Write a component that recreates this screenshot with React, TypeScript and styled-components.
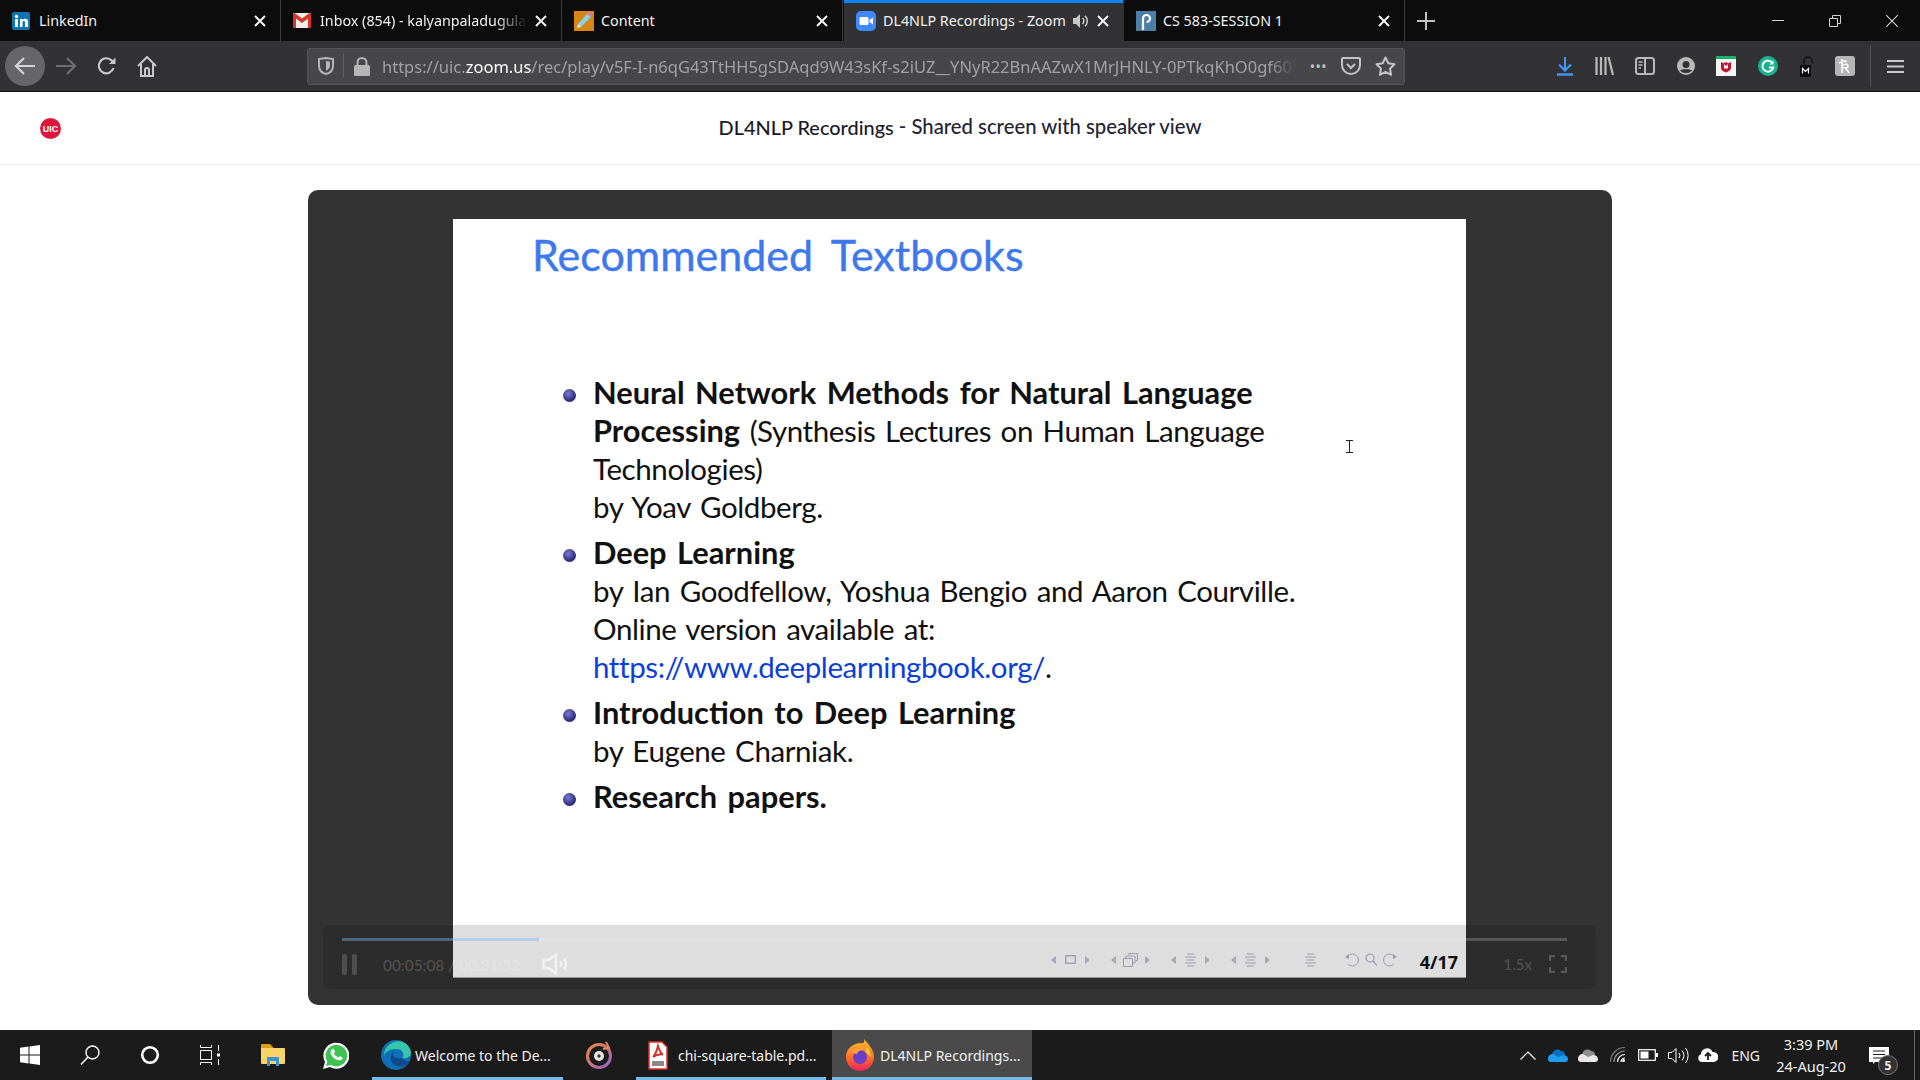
import React from 'react'
import styled, { createGlobalStyle } from 'styled-components'

const GlobalStyle = createGlobalStyle`
  html, body {
    margin: 0;
    padding: 0;
    background: #fff;
    font-family: 'Noto Sans', 'Open Sans', sans-serif;
  }
  * { box-sizing: border-box; }
`

/* browser chrome icons */
const Svg = styled.svg`
  display: block;
  flex: none;
`

const LinkedInIcon = () => (
  <Svg width="18" height="18" viewBox="0 0 18 18">
    <rect width="18" height="18" rx="2" fill="#0f75b0" />
    <rect x="3" y="7" width="3" height="8" fill="#fff" />
    <circle cx="4.5" cy="4.5" r="1.7" fill="#fff" />
    <path d="M8 7h2.8v1.2C11.4 7.3 12.3 6.8 13.4 6.8c2 0 2.6 1.3 2.6 3.4V15h-3v-4.3c0-1-.3-1.6-1.1-1.6-.9 0-1.4.6-1.4 1.7V15H8z" fill="#fff" />
  </Svg>
)
const GmailIcon = () => (
  <Svg width="18" height="15" viewBox="0 0 18 15">
    <rect width="18" height="15" rx="1" fill="#f1efec" />
    <path d="M0 1.5V15h3V5.5L9 10l6-4.500V15h3V1.500C18 .4 16.800-.3 15.800.4L9 5.500 2.200.4C1.200-.3 0 .4 0 1.500z" fill="#d5352b" />
  </Svg>
)
const ContentIcon = () => (
  <Svg width="20" height="20" viewBox="0 0 20 20">
    <rect width="20" height="20" fill="#d98512" />
    <path d="M3 17l1-4L13 3l4 3L7 16z" fill="#7fd6ea" />
    <path d="M13 3l2-2 3 3-1 2z" fill="#d678c8" />
    <path d="M3 17l1-4 3 3z" fill="#f7e4b0" />
  </Svg>
)
const ZoomIcon = () => (
  <Svg width="20" height="20" viewBox="0 0 20 20">
    <rect width="20" height="20" rx="5" fill="#3d8bff" />
    <rect x="3.500" y="6" width="9" height="8" rx="1.500" fill="#fff" />
    <path d="M13.500 9l3.500-2.500v7L13.500 11z" fill="#fff" />
  </Svg>
)
const PanoptoIcon = () => (
  <Svg width="20" height="20" viewBox="0 0 20 20">
    <rect width="20" height="20" fill="#4b7fa8" />
    <path d="M7 19V7.500a3.500 3.500 0 1 1 3.500 3.500" fill="none" stroke="#fff" strokeWidth="2.200" />
  </Svg>
)
const CloseIcon = ({ size = 12, weight = 2 }: { size?: number; weight?: number }) => (
  <Svg width={size} height={size} viewBox="0 0 12 12">
    <path d="M1 1l10 10M11 1L1 11" stroke="currentColor" strokeWidth={weight} fill="none" />
  </Svg>
)
const SpeakerFill = () => (
  <Svg width="17" height="16" viewBox="0 0 17 16">
    <path d="M1 5h3l4-4v14l-4-4H1z" fill="#c8c8c8" />
    <path d="M10.500 5a4 4 0 0 1 0 6M13 2.800a7 7 0 0 1 0 10.400" stroke="#c8c8c8" strokeWidth="1.600" fill="none" />
  </Svg>
)

const BackArrow = ({ color }: { color: string }) => (
  <Svg width="22" height="20" viewBox="0 0 22 20">
    <path d="M10 2L2 10l8 8M2.500 10H21" stroke={color} strokeWidth="2.200" fill="none" />
  </Svg>
)
const ForwardArrow = ({ color }: { color: string }) => (
  <Svg width="22" height="20" viewBox="0 0 22 20">
    <path d="M12 2l8 8-8 8M19.500 10H1" stroke={color} strokeWidth="2.200" fill="none" />
  </Svg>
)
const ReloadIcon = () => (
  <Svg width="20" height="20" viewBox="0 0 20 20">
    <path d="M16.500 12a7.500 7.500 0 1 1-1.800-7.500L17.500 7" stroke="#c9c9c9" strokeWidth="2.200" fill="none" />
    <path d="M18.500 1.500V8h-6.500z" fill="#c9c9c9" />
  </Svg>
)
const HomeIcon = () => (
  <Svg width="20" height="21" viewBox="0 0 20 21">
    <path d="M1 10l9-9 9 9M4 8v12h12V8M8 20v-6a2 2 0 0 1 4 0v6" stroke="#c9c9c9" strokeWidth="2" fill="none" />
  </Svg>
)
const ShieldIcon = () => (
  <Svg width="16" height="18" viewBox="0 0 16 18">
    <path d="M1 2l7-1 7 1v7c0 4-3 7-7 8-4-1-7-4-7-8z" fill="none" stroke="#b5b5b5" strokeWidth="2" />
    <path d="M8 4l4 .6V9c0 2-2 4-4 4.800z" fill="#b5b5b5" />
  </Svg>
)
const LockIcon = () => (
  <Svg width="16" height="19" viewBox="0 0 16 19">
    <rect y="8" width="16" height="11" rx="1.500" fill="#b5b5b5" />
    <path d="M3.500 8.500V5.500a4.500 4.500 0 0 1 9 0v3" fill="none" stroke="#b5b5b5" strokeWidth="2" />
  </Svg>
)
const PocketIcon = () => (
  <Svg width="20" height="18" viewBox="0 0 20 18">
    <path d="M2 1h16a1 1 0 0 1 1 1v6a9 9 0 0 1-18 0V2a1 1 0 0 1 1-1z" fill="none" stroke="#c4c4c4" strokeWidth="2" />
    <path d="M6 7l4 4 4-4" fill="none" stroke="#c4c4c4" strokeWidth="2" />
  </Svg>
)
const StarIcon = () => (
  <Svg width="21" height="20" viewBox="0 0 21 20">
    <path d="M10.500 1.500l2.800 5.800 6.200.9-4.500 4.400 1.100 6.200-5.600-3-5.600 3 1.100-6.200L1.500 8.200l6.200-.9z" fill="none" stroke="#c4c4c4" strokeWidth="2" strokeLinejoin="round" />
  </Svg>
)
const DownloadIcon = () => (
  <Svg width="16" height="20" viewBox="0 0 16 20">
    <path d="M8 1v13M2 8.500L8 14.500l6-6" stroke="#3d9bff" strokeWidth="2" fill="none" />
    <path d="M0 18.500h16" stroke="#3d9bff" strokeWidth="2.400" />
  </Svg>
)
const LibraryIcon = () => (
  <Svg width="19" height="18" viewBox="0 0 19 18">
    <path d="M1.500 0v18M6 0v18M10.500 0v18M13.500 0l4.500 18" stroke="#b9b9b9" strokeWidth="2.200" fill="none" />
  </Svg>
)
const SidebarIcon = () => (
  <Svg width="20" height="18" viewBox="0 0 20 18">
    <rect x="1" y="1" width="18" height="16" rx="2.500" fill="none" stroke="#b9b9b9" strokeWidth="2" />
    <path d="M10 1v16" stroke="#b9b9b9" strokeWidth="2" />
    <path d="M3.500 5h4M3.500 8h4M3.500 11h2.500" stroke="#b9b9b9" strokeWidth="1.400" />
  </Svg>
)
const AccountIcon = () => (
  <Svg width="18" height="18" viewBox="0 0 18 18">
    <circle cx="9" cy="9" r="9" fill="#b9b9b9" />
    <circle cx="9" cy="7.500" r="3.500" fill="#323234" />
    <path d="M3 13.500c1.800-1.600 10.200-1.600 12 0-1.500 1.700-3.500 2.500-6 2.500s-4.500-.8-6-2.500z" fill="#323234" />
  </Svg>
)
const McAfeeIcon = () => (
  <Svg width="20" height="20" viewBox="0 0 20 20">
    <rect width="20" height="20" fill="#f5f5f5" />
    <rect width="20" height="3" fill="#17b26a" />
    <path d="M5 6l2.500 1.200L10 6l2.500 1.200L15 6v6c0 2-2.500 3.500-5 4.500C7.500 15.500 5 14 5 12z" fill="#c0162c" />
    <path d="M8 8v4.500h4V8l-2 2z" fill="#f5f5f5" />
  </Svg>
)
const GrammarlyIcon = () => (
  <Svg width="20" height="20" viewBox="0 0 20 20">
    <circle cx="10" cy="10" r="10" fill="#15b38f" />
    <path d="M14.500 7a5.500 5.500 0 1 0 .8 4.500H11" fill="none" stroke="#fff" strokeWidth="2" />
    <path d="M15.500 4.500v4h-4z" fill="#fff" />
  </Svg>
)
const MediumLockIcon = () => (
  <Svg width="14" height="21" viewBox="0 0 14 21">
    <path d="M5 9V5a4 4 0 0 1 8 0v2" fill="none" stroke="#111" strokeWidth="1.500" />
    <rect x="1" y="9" width="11" height="12" rx="1" fill="#0b0b0b" />
    <path d="M3.500 17.500v-5l3 3 3-3v5" stroke="#fff" strokeWidth="1.200" fill="none" />
  </Svg>
)
const HoneyIcon = () => (
  <Svg width="20" height="20" viewBox="0 0 20 20">
    <rect width="20" height="20" rx="3" fill="#b5b5b5" />
    <path d="M7 3v14M7 10c2-2 6-3 6 0 0 2-2 2-3 2 1 .6 2.500 2 4 5M4 7c2-1 6-2 8-2" stroke="#fff" strokeWidth="1.500" fill="none" />
  </Svg>
)
const MenuIcon = () => (
  <Svg width="17" height="15" viewBox="0 0 17 15">
    <path d="M0 2h17M0 7.500h17M0 13h17" stroke="#c9c9c9" strokeWidth="2.200" />
  </Svg>
)
const PlusIcon = () => (
  <Svg width="18" height="18" viewBox="0 0 18 18">
    <path d="M9 0v18M0 9h18" stroke="#c2c2c2" strokeWidth="2" />
  </Svg>
)
const RestoreIcon = () => (
  <Svg width="12" height="12" viewBox="0 0 12 12">
    <path d="M.5 3.500h8v8h-8zM3.500 3V.5h8v8H9" fill="none" stroke="#d0d0d0" />
  </Svg>
)

/* player icons */
const PauseIcon = () => (
  <Svg width="15" height="21" viewBox="0 0 15 21">
    <rect width="5" height="21" rx="2" fill="rgba(255,255,255,.17)" />
    <rect x="10" width="5" height="21" rx="2" fill="rgba(255,255,255,.17)" />
  </Svg>
)
const VolumeIcon = () => (
  <Svg width="26" height="22" viewBox="0 0 26 22">
    <path d="M1.500 7h5L14 1.500v19L6.500 15h-5z" fill="none" stroke="#f2f2f2" strokeWidth="2.400" />
    <path d="M18 8a5 5 0 0 1 0 6" fill="none" stroke="#f2f2f2" strokeWidth="2" />
    <path d="M22 5.500a10 10 0 0 1 0 11" fill="none" stroke="#f2f2f2" strokeWidth="2.400" />
  </Svg>
)
const FullscreenIcon = () => (
  <Svg width="18" height="18" viewBox="0 0 18 18">
    <path d="M1 6V1h5M12 1h5v5M17 12v5h-5M6 17H1v-5" stroke="rgba(255,255,255,.2)" strokeWidth="2.400" fill="none" />
  </Svg>
)

/* beamer navigation symbols */
const navInk = '#b3b3c6'
const Arrowhead = ({ right }: { right?: boolean }) => (
  <Svg width="5" height="8" viewBox="0 0 5 8">
    <path d={right ? 'M0 0l5 4-5 4z' : 'M5 0L0 4l5 4z'} fill={navInk} opacity={0.8} />
  </Svg>
)
const NavFrame = () => (
  <Svg width="11" height="9" viewBox="0 0 11 9">
    <rect x=".7" y=".7" width="9.600" height="7.600" fill="none" stroke={navInk} strokeWidth="1.300" />
  </Svg>
)
const NavStack = () => (
  <Svg width="15" height="14" viewBox="0 0 15 14">
    <path d="M.5 5.500h9v8h-9zM3 5V3h9v7h-2M6 2.500V.5h8.500v7H12.500" fill="none" stroke={navInk} />
  </Svg>
)
const NavLines = () => (
  <Svg width="11" height="14" viewBox="0 0 11 14">
    <path d="M2 1h7M0 4h11M2 7h7M0 10h11M2 13h7" stroke={navInk} strokeWidth="1.200" />
  </Svg>
)
const NavBack = () => (
  <Svg width="15" height="14" viewBox="0 0 15 14">
    <path d="M3 3a6 6 0 1 1 0 8" fill="none" stroke={navInk} />
    <path d="M0 4l4 2V1z" fill={navInk} />
  </Svg>
)
const NavSearch = () => (
  <Svg width="12" height="13" viewBox="0 0 12 13">
    <circle cx="5" cy="5" r="4" fill="none" stroke={navInk} strokeWidth="1.200" />
    <path d="M8 8l4 4.500" stroke={navInk} strokeWidth="1.400" />
  </Svg>
)
const NavForward = () => (
  <Svg width="15" height="14" viewBox="0 0 15 14">
    <path d="M12 3a6 6 0 1 0 0 8" fill="none" stroke={navInk} />
    <path d="M15 4l-4 2V1z" fill={navInk} />
  </Svg>
)

/* taskbar icons */
const WindowsIcon = () => (
  <Svg width="20" height="20" viewBox="0 0 20 20">
    <path d="M0 2.800l8.500-1.200v8H0zM9.500 1.400L20 0v9.600H9.500zM0 10.500h8.500v8L0 17.300zM9.500 10.500H20V20L9.500 18.600z" fill="#fff" />
  </Svg>
)
const SearchIcon = () => (
  <Svg width="20" height="20" viewBox="0 0 20 20">
    <circle cx="12.500" cy="7.500" r="6.500" fill="none" stroke="#fff" strokeWidth="1.400" />
    <path d="M8 12l-7 7.500" stroke="#fff" strokeWidth="1.400" />
  </Svg>
)
const CortanaIcon = () => (
  <Svg width="20" height="20" viewBox="0 0 20 20">
    <circle cx="10" cy="10" r="7.800" fill="none" stroke="#fff" strokeWidth="2.600" />
  </Svg>
)
const TaskViewIcon = () => (
  <Svg width="20" height="20" viewBox="0 0 20 20">
    <path d="M.5 0v2.500h11V0M.5 20v-2.500h11V20M.5 5.500h11v9H.5zM18.500 0v6M18.500 14v6" fill="none" stroke="#fff" />
    <rect x="17" y="8.500" width="3" height="3" fill="#fff" />
  </Svg>
)
const ExplorerIcon = () => (
  <Svg width="24" height="22" viewBox="0 0 24 22">
    <path d="M0 1a1 1 0 0 1 1-1h8l3 3v2H0z" fill="#dd9f12" />
    <rect y="4" width="24" height="16" rx="1" fill="#f9d568" />
    <path d="M6 22V13h12v9h-3v-5H9v5z" fill="#3b92d8" />
  </Svg>
)
const WhatsAppIcon = () => (
  <Svg width="26" height="27" viewBox="0 0 26 27">
    <path d="M0 27l2-7A13 13 0 1 1 7 25z" fill="#fff" />
    <path d="M3 24l1.300-4.500A10.800 10.800 0 1 1 8 23z" fill="#3fc252" />
    <path d="M8.500 7.500c1-1.300 2-1 2.500 0l1 2c.2.600-1 1.600-1 2 .8 1.600 2.200 3 4 3.800.6 0 1.400-1.300 2-1.100l2 1c.7.400.6 1.300 0 2-1.500 1.800-4 1.300-6.500 0-3.500-2-6.500-6.800-4-9.700z" fill="#fff" />
  </Svg>
)
const EdgeIcon = () => (
  <Svg width="30" height="30" viewBox="0 0 30 30">
    <circle cx="15" cy="15" r="15" fill="#0d6fb8" />
    <path d="M3 17C2 6 13-1 22 2c5 2 8 7 8 11 0 4-5 6-9 5 3-3 1-9-6-9-6 0-12 3-12 8z" fill="#35c5a9" />
    <path d="M21 18c-3 1-9 0-9-4 0-3 3-5 5-4-5 0-8 4-7 10 1 5 7 8 13 6 3-1 5-3 6-5-2 1-5 0-8-3z" fill="#114a8b" />
  </Svg>
)
const GrooveIcon = () => (
  <Svg width="26" height="30" viewBox="0 0 26 30">
    <circle cx="13" cy="16" r="11.500" fill="none" stroke="url(#groove)" strokeWidth="3" />
    <circle cx="13" cy="16" r="5" fill="#e6e6e6" />
    <circle cx="13" cy="16" r="1.700" fill="#333" />
    <path d="M20 2l3 6-6 1" fill="none" stroke="#e08a50" strokeWidth="2" />
    <defs>
      <linearGradient id="groove" x1="0" y1="0" x2="1" y2="1">
        <stop offset="0" stopColor="#f08a3c" />
        <stop offset="1" stopColor="#9a5fc8" />
      </linearGradient>
    </defs>
  </Svg>
)
const PdfIcon = () => (
  <Svg width="20" height="29" viewBox="0 0 20 29">
    <path d="M1 1h13l5 5v22H1z" fill="#fff" stroke="#d6332b" strokeWidth="1.500" />
    <path d="M10 5c-1 4-3 9-5 11 3-2 7-3 10-2.500-3-1.500-4-5.500-5-8.500z" fill="none" stroke="#d6332b" strokeWidth="2" />
    <rect x="4" y="20" width="12" height="5" fill="#8a8a8a" />
  </Svg>
)
const FirefoxIcon = () => (
  <Svg width="28" height="32" viewBox="0 0 28 32">
    <defs>
      <linearGradient id="fox" x1="0" y1="0" x2="0" y2="1">
        <stop offset="0" stopColor="#ffbd2e" />
        <stop offset=".6" stopColor="#ff6a2b" />
        <stop offset="1" stopColor="#e8245c" />
      </linearGradient>
    </defs>
    <path d="M14 4C7 5 0 9 0 18a14 14 0 0 0 28 0C28 10 22 5 18 0c1 4-1 5-4 4z" fill="url(#fox)" />
    <circle cx="14" cy="18" r="7" fill="#6a3ec6" />
    <path d="M5 13c3-4 10-4 13-2-4 0-6 1-7 4-2 0-4-1-6-2z" fill="#ffa230" />
    <path d="M20 8c3 2 5 6 5 10l-5-5z" fill="#ffcf3d" />
  </Svg>
)
const ChevronIcon = () => (
  <Svg width="16" height="9" viewBox="0 0 16 9">
    <path d="M.5 8.500L8 1l7.500 7.500" stroke="#fff" strokeWidth="1.200" fill="none" />
  </Svg>
)
const CloudIcon = ({ top, bottom }: { top: string; bottom: string }) => (
  <Svg width="20" height="13" viewBox="0 0 20 13">
    <path d="M4 5C5 1 10-1 13 2c3 0 4 2 4 4L8 9z" fill={top} />
    <path d="M0 10c0-3 2-5 5-5l5 3 5-2c3-.5 5 2 5 4s-1 3-3 3H3c-2 0-3-1-3-3z" fill={bottom} />
  </Svg>
)
const WifiIcon = () => (
  <Svg width="16" height="16" viewBox="0 0 16 16">
    <path d="M.5 15A14.500 14.500 0 0 1 15 .5" stroke="#777" strokeWidth="1.200" fill="none" />
    <path d="M4 15A11 11 0 0 1 15 4" stroke="#888" strokeWidth="1.200" fill="none" />
    <path d="M7.500 15A7.500 7.500 0 0 1 15 7.500M11 15a4 4 0 0 1 4-4" stroke="#fff" strokeWidth="1.200" fill="none" />
    <circle cx="13.500" cy="13.500" r="1.500" fill="#fff" />
  </Svg>
)
const BatteryIcon = () => (
  <Svg width="20" height="12" viewBox="0 0 20 12">
    <rect x=".7" y=".7" width="16.600" height="10.600" fill="none" stroke="#fff" strokeWidth="1.200" />
    <rect x="2.500" y="2.500" width="8" height="7" fill="#fff" />
    <rect x="18" y="4" width="2" height="4" fill="#fff" />
  </Svg>
)
const TraySpeaker = () => (
  <Svg width="21" height="17" viewBox="0 0 21 17">
    <path d="M.5 5.500h3.500L8 1.500v14l-4-4H.5z" fill="none" stroke="#fff" />
    <path d="M11 6a4 4 0 0 1 0 5M14 3.500a8 8 0 0 1 0 10M17.500 1a12 12 0 0 1 0 15" fill="none" stroke="#fff" />
  </Svg>
)
const UploadCloud = () => (
  <Svg width="20" height="14" viewBox="0 0 20 14">
    <path d="M4 14a4 4 0 0 1-1-7.800A6 6 0 0 1 14.500 4 5 5 0 0 1 16 14z" fill="#fff" />
    <path d="M10 12V6M7 8l3-3 3 3" stroke="#1b1b1b" strokeWidth="1.800" fill="none" />
  </Svg>
)
const NotifIcon = () => (
  <Svg width="20" height="17" viewBox="0 0 20 17">
    <path d="M0 0h20v15H6l-2 2v-2H0z" fill="#fff" />
    <path d="M4 4h12M4 7.500h12M4 11h12" stroke="#1b1b1b" />
  </Svg>
)
const IBeam = () => (
  <Svg width="7" height="13" viewBox="0 0 7 13">
    <path d="M0 .5h7M0 12.500h7M3.500 .5v12" stroke="#222" />
  </Svg>
)

const tabs = [
  { key: 'in', icon: <LinkedInIcon />, title: 'LinkedIn' },
  { key: 'gm', icon: <GmailIcon />, title: 'Inbox (854) - kalyanpaladugula', fade: true },
  { key: 'co', icon: <ContentIcon />, title: 'Content' },
  { key: 'zm', icon: <ZoomIcon />, title: 'DL4NLP Recordings - Zoom', active: true },
  { key: 'pa', icon: <PanoptoIcon />, title: 'CS 583-SESSION 1' },
]

const trayIcons = [
  <ChevronIcon key="chevron" />,
  <CloudIcon key="blue" top="#0a6fc4" bottom="#1e9cef" />,
  <CloudIcon key="grey" top="#8e8e8e" bottom="#e8e8e8" />,
  <WifiIcon key="wifi" />,
  <BatteryIcon key="battery" />,
  <TraySpeaker key="speaker" />,
  <UploadCloud key="upload" />,
]

export default function App(): JSX.Element {
  return (
    <Style.Page>
      <GlobalStyle />
      <Style.TabBar>
        {tabs.map((tab) => (
          <Style.Tab key={tab.key} $active={tab.active}>
            <Style.TabIcon>{tab.icon}</Style.TabIcon>
            <Style.TabTitle $fade={tab.fade}>{tab.title}</Style.TabTitle>
            {tab.active && <SpeakerFill />}
            <Style.TabClose>
              <CloseIcon />
            </Style.TabClose>
          </Style.Tab>
        ))}
        <Style.NewTab>
          <PlusIcon />
        </Style.NewTab>
        <Style.WindowControls>
          <Style.WindowButton>
            <Style.Minimize />
          </Style.WindowButton>
          <Style.WindowButton>
            <RestoreIcon />
          </Style.WindowButton>
          <Style.WindowButton>
            <CloseIcon size={14} weight={0.9} />
          </Style.WindowButton>
        </Style.WindowControls>
      </Style.TabBar>

      <Style.NavBar>
        <Style.BackCircle>
          <BackArrow color="#d4d4d4" />
        </Style.BackCircle>
        <Style.NavButton>
          <ForwardArrow color="#6e6e70" />
        </Style.NavButton>
        <Style.NavButton>
          <ReloadIcon />
        </Style.NavButton>
        <Style.NavButton $width={37}>
          <HomeIcon />
        </Style.NavButton>
        <Style.UrlBar>
          <Style.ShieldSlot>
            <ShieldIcon />
          </Style.ShieldSlot>
          <LockIcon />
          <Style.UrlText>
            https://uic.<b>zoom.us</b>/rec/play/v5F-I-n6qG43TtHH5gSDAqd9W43sKf-s2iUZ__YNyR22BnAAZwX1MrJHNLY-0PTkqKhO0gf60L
          </Style.UrlText>
          <Style.UrlDots>•••</Style.UrlDots>
          <PocketIcon />
          <StarIcon />
        </Style.UrlBar>
        <Style.Toolbar>
          <DownloadIcon />
          <LibraryIcon />
          <SidebarIcon />
          <AccountIcon />
          <McAfeeIcon />
          <GrammarlyIcon />
          <MediumLockIcon />
          <HoneyIcon />
        </Style.Toolbar>
        <Style.MenuSlot>
          <MenuIcon />
        </Style.MenuSlot>
      </Style.NavBar>

      <Style.PageHeader>
        <Style.UicLogo>UIC</Style.UicLogo>
        <Style.PageTitle>
          <Style.PageTitleMain>DL4NLP Recordings</Style.PageTitleMain> - Shared screen with speaker view
        </Style.PageTitle>
      </Style.PageHeader>

      <Style.Main>
        <Style.Player>
          <Style.Slide>
            <Style.SlideTitle>Recommended Textbooks</Style.SlideTitle>
            <Style.BookList>
              <Style.Book>
                <b>Neural Network Methods for Natural Language</b>
                <br />
                <b>Processing</b> (Synthesis Lectures on Human Language
                <br />
                Technologies)
                <br />
                by Yoav Goldberg.
              </Style.Book>
              <Style.Book>
                <b>Deep Learning</b>
                <br />
                by Ian Goodfellow, Yoshua Bengio and Aaron Courville.
                <br />
                Online version available at:
                <br />
                <Style.BookLink>https://www.deeplearningbook.org/</Style.BookLink>.
              </Style.Book>
              <Style.Book>
                <b>Introduction to Deep Learning</b>
                <br />
                by Eugene Charniak.
              </Style.Book>
              <Style.Book>
                <b>Research papers.</b>
              </Style.Book>
            </Style.BookList>
            <Style.SlideFooter>
              <Style.BeamerNav>
                <Arrowhead />
                <NavFrame />
                <Arrowhead right />
              </Style.BeamerNav>
              <Style.BeamerNav>
                <Arrowhead />
                <NavStack />
                <Arrowhead right />
              </Style.BeamerNav>
              <Style.BeamerNav>
                <Arrowhead />
                <NavLines />
                <Arrowhead right />
              </Style.BeamerNav>
              <Style.BeamerNav>
                <Arrowhead />
                <NavLines />
                <Arrowhead right />
              </Style.BeamerNav>
              <Style.BeamerSingle>
                <NavLines />
              </Style.BeamerSingle>
              <Style.BeamerTools>
                <NavBack />
                <NavSearch />
                <NavForward />
              </Style.BeamerTools>
              <Style.PageNumber>4/17</Style.PageNumber>
            </Style.SlideFooter>
            <Style.Cursor>
              <IBeam />
            </Style.Cursor>
          </Style.Slide>
          <Style.Controls>
            <Style.Progress>
              <Style.ProgressFill style={{ width: `${(308 / 1912) * 100}%` }} />
            </Style.Progress>
            <Style.ControlRow>
              <PauseIcon />
              <Style.Time>00:05:08 / 00:31:52</Style.Time>
              <VolumeIcon />
              <Style.Speed>1.5x</Style.Speed>
              <FullscreenIcon />
            </Style.ControlRow>
          </Style.Controls>
        </Style.Player>
      </Style.Main>

      <Style.TaskBar>
        <Style.TaskIcon $width={60}>
          <WindowsIcon />
        </Style.TaskIcon>
        <Style.TaskIcon $width={60}>
          <SearchIcon />
        </Style.TaskIcon>
        <Style.TaskIcon $width={60}>
          <CortanaIcon />
        </Style.TaskIcon>
        <Style.TaskIcon $width={60}>
          <TaskViewIcon />
        </Style.TaskIcon>
        <Style.TaskIcon $width={65}>
          <ExplorerIcon />
        </Style.TaskIcon>
        <Style.TaskIcon $width={62}>
          <WhatsAppIcon />
        </Style.TaskIcon>
        <Style.TaskApp $width={191} $lead={5} $pad={9} $gap={4}>
          <EdgeIcon />
          <span>Welcome to the De...</span>
        </Style.TaskApp>
        <Style.TaskIcon $width={72}>
          <GrooveIcon />
        </Style.TaskIcon>
        <Style.TaskApp $width={190} $lead={1} $pad={12} $gap={10}>
          <PdfIcon />
          <span>chi-square-table.pd...</span>
        </Style.TaskApp>
        <Style.TaskApp $width={200} $lead={6} $pad={14} $gap={6} $active>
          <FirefoxIcon />
          <span>DL4NLP Recordings...</span>
        </Style.TaskApp>
        <Style.Tray>
          {trayIcons.map((icon) => (
            <Style.TraySlot key={icon.key}>{icon}</Style.TraySlot>
          ))}
          <Style.Lang>ENG</Style.Lang>
          <Style.Clock>
            <span>3:39 PM</span>
            <span>24-Aug-20</span>
          </Style.Clock>
          <Style.Notif>
            <NotifIcon />
            <Style.NotifBadge>5</Style.NotifBadge>
          </Style.Notif>
          <Style.ShowDesktop />
        </Style.Tray>
      </Style.TaskBar>
    </Style.Page>
  )
}

const Style = {
  Page: styled.div`
    display: flex;
    flex-direction: column;
    width: 1920px;
    height: 1080px;
    overflow: hidden;
  `,
  TabBar: styled.div`
    display: flex;
    height: 41px;
    flex: none;
    background: #0c0c0c;
  `,
  Tab: styled.div<{ $active?: boolean }>`
    display: flex;
    align-items: center;
    width: ${({ $active }) => ($active ? 280 : 281)}px;
    flex: none;
    margin-left: ${({ $active }) => ($active ? 1 : 0)}px;
    padding: 0 14px 0 12px;
    font-size: 14.300px;
    color: #f2f2f2;
    background: ${({ $active }) => ($active ? '#323234' : 'transparent')};
    border-right: 1px solid ${({ $active }) => ($active ? 'transparent' : '#3b3b3b')};
    box-shadow: ${({ $active }) => ($active ? 'inset 0 3px 0 #0a84ff' : 'none')};
  `,
  TabIcon: styled.div`
    width: 27px;
    flex: none;
  `,
  TabTitle: styled.div<{ $fade?: boolean }>`
    flex: 1;
    min-width: 0;
    white-space: nowrap;
    overflow: hidden;
    ${({ $fade }) =>
      $fade && 'mask-image: linear-gradient(to right, #000 85%, transparent 100%);'}
  `,
  TabClose: styled.div`
    flex: none;
    margin-left: 8px;
    color: #f4f4f4;
  `,
  NewTab: styled.div`
    display: flex;
    align-items: center;
    justify-content: center;
    width: 42px;
    flex: none;
  `,
  WindowControls: styled.div`
    display: flex;
    align-items: center;
    margin-left: auto;
    color: #d8d8d8;
  `,
  WindowButton: styled.div`
    display: flex;
    align-items: center;
    justify-content: center;
    width: 57px;
    height: 41px;
  `,
  Minimize: styled.div`
    width: 12px;
    height: 1px;
    background: #d8d8d8;
  `,
  NavBar: styled.div`
    display: flex;
    align-items: center;
    gap: 1px;
    height: 51px;
    flex: none;
    padding-left: 5px;
    background: #323234;
    border-bottom: 1px solid #0c0c0c;
  `,
  BackCircle: styled.div`
    display: flex;
    align-items: center;
    justify-content: center;
    width: 40px;
    height: 40px;
    flex: none;
    border-radius: 50%;
    background: #666668;
  `,
  NavButton: styled.div<{ $width?: number }>`
    display: flex;
    align-items: center;
    justify-content: center;
    width: ${({ $width }) => $width ?? 40}px;
    height: 40px;
    flex: none;
  `,
  UrlBar: styled.div`
    display: flex;
    align-items: center;
    gap: 14px;
    width: 1098px;
    height: 37px;
    flex: none;
    margin-left: 141px;
    padding: 0 8px 0 0;
    background: #474749;
    border: 1px solid #56565a;
    border-radius: 3px;
  `,
  ShieldSlot: styled.div`
    display: flex;
    align-items: center;
    justify-content: center;
    width: 36px;
    height: 24px;
    flex: none;
    margin-right: -4px;
    border-right: 1px solid #606064;
  `,
  UrlText: styled.div`
    flex: 1;
    min-width: 0;
    margin-left: -2px;
    font-size: 16.500px;
    color: #a2a2a4;
    white-space: nowrap;
    overflow: hidden;
    mask-image: linear-gradient(to right, #000 97%, transparent 100%);

    b {
      color: #fff;
      font-weight: 400;
    }
  `,
  UrlDots: styled.div`
    flex: none;
    font-size: 14px;
    letter-spacing: 0.500px;
    color: #c4c4c4;
  `,
  Toolbar: styled.div`
    display: flex;
    align-items: center;
    justify-content: space-between;
    width: 298px;
    flex: none;
    margin-left: 151px;
    margin-right: 14px;
  `,
  MenuSlot: styled.div`
    display: flex;
    align-items: center;
    justify-content: center;
    height: 42px;
    flex: 1;
    border-left: 1px solid #505052;
  `,
  PageHeader: styled.header`
    position: relative;
    display: flex;
    align-items: center;
    justify-content: center;
    height: 73px;
    flex: none;
    border-bottom: 1px solid #eceef3;
  `,
  UicLogo: styled.div`
    position: absolute;
    left: 40px;
    top: 26px;
    display: flex;
    align-items: center;
    justify-content: center;
    width: 21px;
    height: 21px;
    border-radius: 50%;
    background: #e0173c;
    color: #fff;
    font-size: 9px;
    font-weight: 700;
    font-family: 'Liberation Sans', sans-serif;
  `,
  PageTitle: styled.h1`
    margin: 0 0 4px;
    font-family: Lato, sans-serif;
    font-size: 20.300px;
    font-weight: 500;
    color: #232333;
  `,
  PageTitleMain: styled.span`
    position: relative;
    top: 1px;
    font-size: 19.900px;
    color: #1a1a28;
  `,
  Main: styled.main`
    flex: 1;
    min-height: 0;
    padding-top: 25px;
  `,
  Player: styled.section`
    position: relative;
    width: 1304px;
    height: 815px;
    margin-left: 308px;
    padding-top: 29px;
    background: #333;
    border-radius: 10px;
  `,
  Slide: styled.div`
    position: relative;
    display: flex;
    flex-direction: column;
    width: 1013px;
    height: 759px;
    margin-left: 145px;
    padding: 0 0 0 79px;
    background: #fff;
    font-family: Lato, sans-serif;
    color: #111;
  `,
  SlideTitle: styled.h2`
    margin: 0;
    height: 155px;
    font-size: 43px;
    font-weight: 400;
    line-height: 72px;
    color: #3d78ee;
    word-spacing: 8px;
    white-space: nowrap;
    -webkit-text-stroke: 0.4px #3d78ee;
  `,
  BookList: styled.ul`
    margin: 0;
    padding: 0 0 0 61px;
    list-style: none;
    font-size: 29.500px;
    letter-spacing: -0.400px;
    line-height: 38px;
    word-spacing: 2.400px;
    white-space: nowrap;

    b {
      font-size: 30.800px;
      font-weight: 700;
      letter-spacing: 0;
      word-spacing: 3px;
    }
  `,
  Book: styled.li`
    position: relative;
    margin-bottom: 8px;

    &::before {
      content: '';
      position: absolute;
      left: -30px;
      top: 15px;
      width: 13px;
      height: 13px;
      border-radius: 50%;
      background: radial-gradient(circle at 40% 35%, #7b7bcf, #20206e 75%);
    }
  `,
  BookLink: styled.span`
    color: #0c3fd8;
  `,
  SlideFooter: styled.div`
    display: flex;
    align-items: center;
    justify-content: flex-end;
    gap: 21px;
    height: 53px;
    margin-top: auto;
    margin-left: -79px;
    padding: 17px 8px 0 0;
    border-bottom: 1px solid #aaa;
  `,
  BeamerNav: styled.div`
    display: flex;
    align-items: center;
    justify-content: space-between;
    width: 39px;
  `,
  BeamerSingle: styled.div`
    margin-left: 14px;
  `,
  BeamerTools: styled.div`
    display: flex;
    align-items: center;
    gap: 5px;
    margin-left: 8px;
  `,
  PageNumber: styled.div`
    margin: 5px 0 0 2px;
    font-size: 18px;
    font-weight: 700;
    font-family: 'Noto Sans', sans-serif;
    color: #111;
  `,
  Cursor: styled.div`
    position: absolute;
    left: 893px;
    top: 221px;
  `,
  Controls: styled.div`
    position: absolute;
    left: 15px;
    right: 16px;
    top: 735px;
    height: 64px;
    padding: 13px 29px 0 19px;
    border-radius: 8px;
    background: rgba(0, 0, 0, 0.13);
  `,
  Progress: styled.div`
    height: 3px;
    background: rgba(255, 255, 255, 0.2);
  `,
  ProgressFill: styled.div`
    height: 3px;
    background: rgba(45, 140, 255, 0.25);
  `,
  ControlRow: styled.div`
    display: flex;
    align-items: center;
    height: 38px;
    margin-top: 4px;
    color: rgba(255, 255, 255, 0.2);
  `,
  Time: styled.div`
    margin: 2px 22px 0 26px;
    font-family: Lato, sans-serif;
    font-size: 15.400px;
  `,
  Speed: styled.div`
    margin: 0 17px 0 auto;
    font-family: Lato, sans-serif;
    font-size: 15px;
  `,
  TaskBar: styled.footer`
    display: flex;
    align-items: stretch;
    height: 50px;
    flex: none;
    background: #1b1b1b;
    color: #f2f2f2;
  `,
  TaskIcon: styled.div<{ $width: number }>`
    display: flex;
    align-items: center;
    justify-content: center;
    width: ${({ $width }) => $width}px;
    flex: none;
  `,
  TaskApp: styled.div<{ $width: number; $lead: number; $pad: number; $gap: number; $active?: boolean }>`
    display: flex;
    align-items: center;
    gap: ${({ $gap }) => $gap}px;
    width: ${({ $width }) => $width}px;
    flex: none;
    margin-left: ${({ $lead }) => $lead}px;
    padding-left: ${({ $pad }) => $pad}px;
    padding-top: 3px;
    font-size: 14px;
    white-space: nowrap;
    background: ${({ $active }) => ($active ? '#4a4a4a' : 'transparent')};
    border-bottom: 3px solid #76b9ed;
  `,
  Tray: styled.div`
    display: flex;
    align-items: center;
    margin-left: auto;
  `,
  TraySlot: styled.div`
    display: flex;
    align-items: center;
    justify-content: center;
    width: 30px;
    flex: none;
  `,
  Lang: styled.div`
    margin-left: 8px;
    font-size: 14px;
  `,
  Clock: styled.div`
    display: flex;
    flex-direction: column;
    align-items: center;
    width: 76px;
    margin-left: 13px;
    font-size: 14.500px;
    line-height: 22px;
  `,
  Notif: styled.div`
    position: relative;
    display: flex;
    align-items: center;
    justify-content: center;
    width: 36px;
    height: 30px;
    margin-left: 12px;
  `,
  NotifBadge: styled.div`
    position: absolute;
    right: -1px;
    bottom: -5px;
    display: flex;
    align-items: center;
    justify-content: center;
    width: 20px;
    height: 20px;
    border-radius: 50%;
    border: 1px solid #777;
    background: #333;
    font-size: 12px;
    font-weight: 700;
  `,
  ShowDesktop: styled.div`
    width: 1px;
    height: 50px;
    margin-left: 17px;
    margin-right: 5px;
    background: #666;
  `,
}
